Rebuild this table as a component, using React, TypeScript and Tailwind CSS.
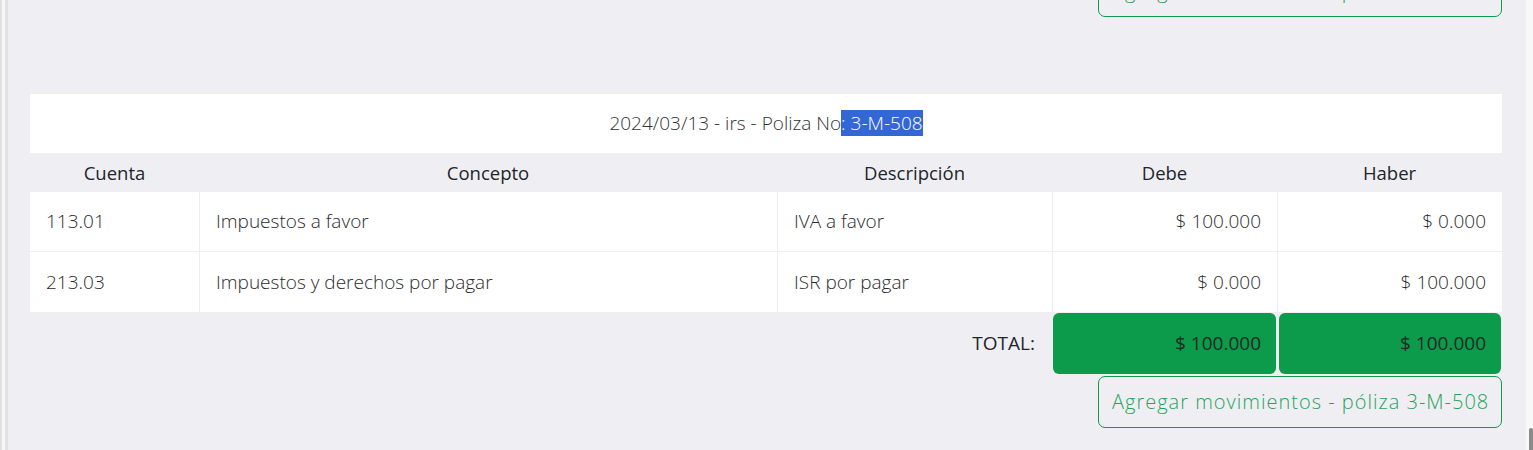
import React from "react";

const rows = [
  { cuenta: "113.01", concepto: "Impuestos a favor", descripcion: "IVA a favor", debe: "$ 100.000", haber: "$ 0.000" },
  { cuenta: "213.03", concepto: "Impuestos y derechos por pagar", descripcion: "ISR por pagar", debe: "$ 0.000", haber: "$ 100.000" },
];

const cols = "grid grid-cols-[169px_578px_275px_225px_225px]";

function AddButton({ label }: { label: string }) {
  return (
    <button className="h-[52px] w-[404px] whitespace-nowrap rounded-[7px] border border-[#0e9b4c] bg-transparent pl-[13px] text-left text-[20px] font-light tracking-[1px] text-[#27a35c]">
      {label}
    </button>
  );
}

export default function App() {
  return (
    <div className="flex min-h-[450px] bg-[#efeff3] text-[#212529]" style={{ fontFamily: '"Open Sans", "Noto Sans", sans-serif' }}>
      {/* left edge of the side panel */}
      <div className="flex w-[8px] shrink-0">
        <div className="w-[2px] bg-[#e2e2e2]" />
        <div className="w-[3px] bg-[#f7f7f7]" />
        <div className="w-[3px] bg-[#e2e2e4]" />
      </div>

      <div className="flex-1 pl-[22px] pr-[24px]">
        <div className="-mt-[35px] flex justify-end">
          <AddButton label="Agregar movimientos - póliza 3-M-507" />
        </div>

        <div className="mt-[77px]">
          <div className="flex h-[59px] items-center justify-center bg-white text-[19px] font-light text-[#333]">
            <span>
              2024/03/13 - irs - Poliza No<span className="bg-[#3367d6] text-white">: 3-M-508</span>
            </span>
          </div>

          <div className={`${cols} h-[39px] items-center text-center text-[18.5px]`}>
            <div>Cuenta</div>
            <div>Concepto</div>
            <div>Descripción</div>
            <div>Debe</div>
            <div>Haber</div>
          </div>

          {rows.map((r, i) => (
            <div key={i} className={`${cols} h-[60px] bg-white text-[19px] font-light text-[#2b2b2b] ${i === 0 ? "border-b border-[#eeeeee]" : ""}`}>
              <div className="flex items-center px-[16px]">{r.cuenta}</div>
              <div className="flex items-center border-l border-[#eeeeee] px-[16px]">{r.concepto}</div>
              <div className="flex items-center border-l border-[#eeeeee] px-[16px]">{r.descripcion}</div>
              <div className="flex items-center justify-end border-l border-[#eeeeee] px-[16px]">{r.debe}</div>
              <div className="flex items-center justify-end border-l border-[#eeeeee] px-[16px]">{r.haber}</div>
            </div>
          ))}

          <div className={`${cols} mt-[1px] h-[61px] text-[19px]`}>
            <div className="col-span-3 flex items-center justify-end pr-[17px]">TOTAL:</div>
            <div className="ml-[1px] mr-[1px] flex items-center justify-end rounded-[6px] bg-[#0c9a4b] pr-[15px] text-[#1f2a24]">$ 100.000</div>
            <div className="ml-[2px] mr-[1px] flex items-center justify-end rounded-[6px] bg-[#0c9a4b] pr-[15px] text-[#1f2a24]">$ 100.000</div>
          </div>

          <div className="mt-[2px] flex justify-end">
            <AddButton label="Agregar movimientos - póliza 3-M-508" />
          </div>
        </div>
      </div>

      {/* scrollbar track */}
      <div className="flex w-[7px] shrink-0 flex-col justify-end bg-[#f8f8f8]">
        <div className="ml-[3px] h-[22px] w-[4px] rounded-t-[2px] bg-[#8a8a8a]" />
      </div>
    </div>
  );
}
